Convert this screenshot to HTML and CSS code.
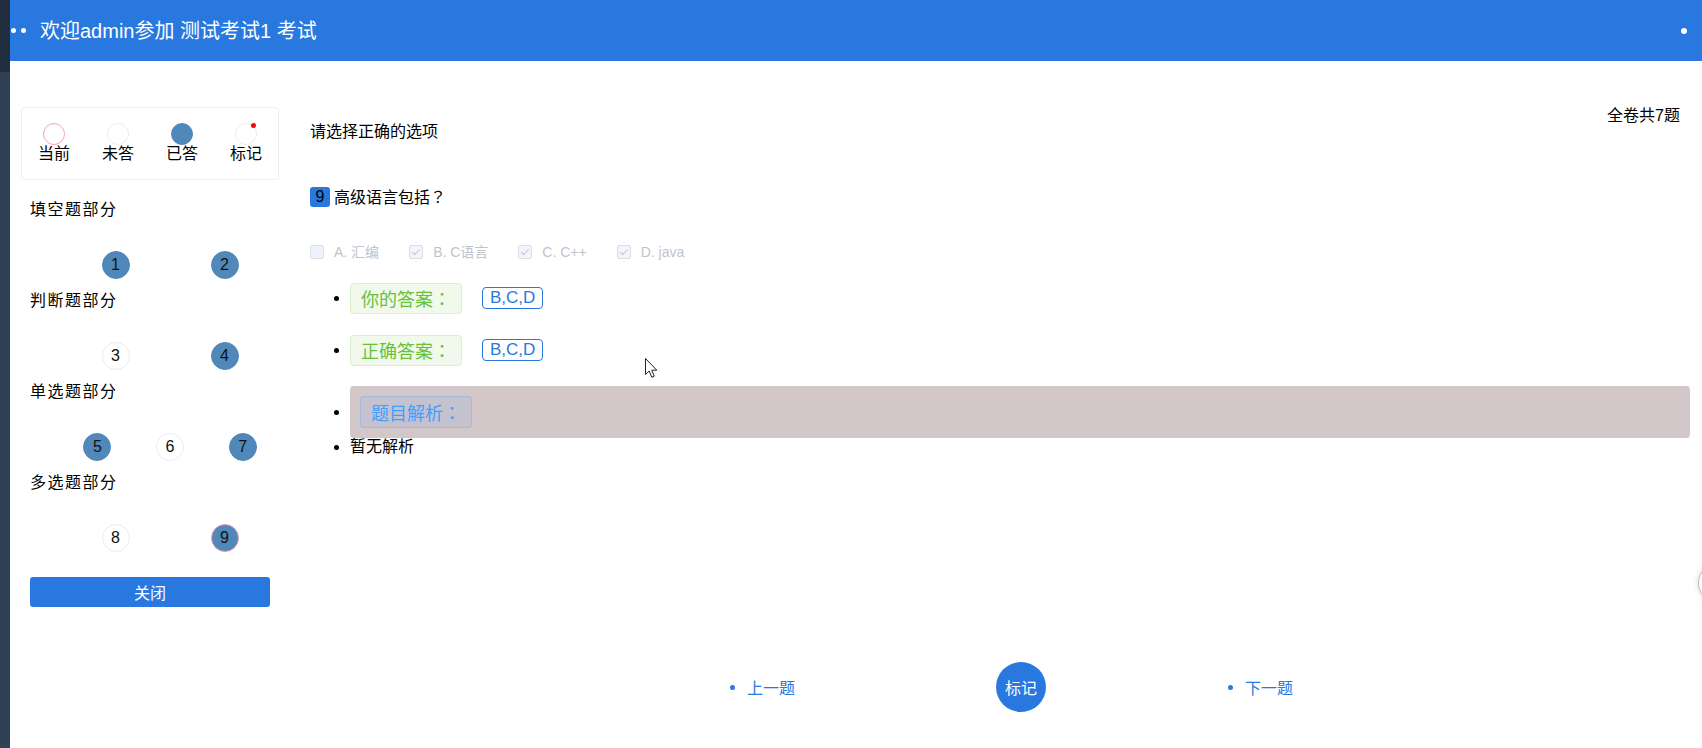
FILE: index.html
```html
<!DOCTYPE html>
<html lang="zh-CN">
<head>
<meta charset="utf-8">
<title>考试</title>
<link rel="stylesheet" href="styles.css">
</head>
<body>
<div class="app">
  <div class="strip"></div>
  <div class="page">
    <header class="header">
      <span class="hdot"></span><span class="hdot"></span>
      <span class="htitle">欢迎admin参加 测试考试1 考试</span>
      <span class="hdot hdot-right"></span>
    </header>
    <div class="body">
      <aside class="sidebar">
        <div class="legend">
          <div class="legend-item"><span class="lcircle lc-current"></span><span class="llabel">当前</span></div>
          <div class="legend-item"><span class="lcircle lc-empty"></span><span class="llabel">未答</span></div>
          <div class="legend-item"><span class="lcircle lc-done"></span><span class="llabel">已答</span></div>
          <div class="legend-item"><span class="lcircle lc-mark"><span class="mark-dot"></span></span><span class="llabel">标记</span></div>
        </div>
        <div class="sec-title first">填空题部分</div>
        <ul class="nums"><li class="num done">1</li><li class="num done">2</li></ul>
        <div class="sec-title">判断题部分</div>
        <ul class="nums"><li class="num">3</li><li class="num done">4</li></ul>
        <div class="sec-title">单选题部分</div>
        <ul class="nums"><li class="num done">5</li><li class="num">6</li><li class="num done">7</li></ul>
        <div class="sec-title">多选题部分</div>
        <ul class="nums"><li class="num">8</li><li class="num done current">9</li></ul>
        <button class="close-btn">关闭</button>
      </aside>
      <main class="content">
        <div class="top-row">
          <div class="instr">请选择正确的选项</div>
          <div class="total">全卷共7题</div>
        </div>
        <div class="question">
          <span class="qbadge">9</span><span class="qtext">高级语言包括<span class="punct" lang="zh-TW">？</span></span>
        </div>
        <div class="options">
          <label class="opt"><span class="cbox"></span><span class="olabel">A. 汇编</span></label>
          <label class="opt"><span class="cbox checked"></span><span class="olabel">B. C语言</span></label>
          <label class="opt"><span class="cbox checked"></span><span class="olabel">C. C++</span></label>
          <label class="opt"><span class="cbox checked"></span><span class="olabel">D. java</span></label>
        </div>
        <ul class="answers">
          <li class="arow"><span class="tag tag-green">你的答案<span class="punct" lang="zh-TW">：</span></span><span class="atag">B,C,D</span></li>
          <li class="arow"><span class="tag tag-green">正确答案<span class="punct" lang="zh-TW">：</span></span><span class="atag">B,C,D</span></li>
          <li class="arow analysis"><div class="abox"><span class="tag tag-blue">题目解析<span class="punct" lang="zh-TW">：</span></span></div></li>
          <li class="arow plain">暂无解析</li>
        </ul>
        <nav class="nav">
          <span class="nav-link prev">上一题</span>
          <span class="mark-btn">标记</span>
          <span class="nav-link next">下一题</span>
        </nav>
      </main>
    </div>
  </div>
</div>
<svg class="cursor" width="13" height="21" viewBox="0 0 13 21"><path d="M0.5 0.5 L0.5 16.5 L4.2 13 L6.8 19.3 L9.3 18.2 L6.8 12.2 L11.8 12.2 Z" fill="#fff" stroke="#222" stroke-width="1"/></svg>
<div class="edge-circle"></div>
</body>
</html>
```

FILE: styles.css
```css
* { box-sizing: border-box; }
html, body { margin: 0; padding: 0; }
body {
  font-family: "Liberation Sans", "Noto Sans CJK SC", sans-serif;
  color: #000;
  background: #fff;
  width: 1702px;
  height: 748px;
  overflow: hidden;
}
.punct { font-family: "Noto Sans CJK TC", sans-serif; }
.app { display: flex; height: 748px; }
.strip {
  width: 10px;
  flex: none;
  background: linear-gradient(#1f2d3d 0, #1f2d3d 72px, #304156 72px);
}
.page { flex: 1; display: flex; flex-direction: column; }

.header {
  height: 61px;
  background: #2878e0;
  display: flex;
  align-items: center;
  padding-left: 1px;
  color: #fff;
}
.hdot {
  width: 5px; height: 5px; border-radius: 50%;
  background: #fff;
  margin-right: 5px;
  flex: none;
}
.htitle { font-size: 20px; margin-left: 9px; line-height: 24px; }
.hdot.hdot-right { width: 6px; height: 6px; margin-left: auto; margin-right: 15px; }

.body { display: flex; flex: 1; }

.sidebar {
  width: 258px;
  margin-left: 11px;
  margin-top: 46px;
  flex: none;
}
.legend {
  display: flex;
  border: 1px solid #ebeef5;
  border-radius: 4px;
  padding: 15px 0 16px;
}
.legend-item {
  flex: 1;
  display: flex;
  flex-direction: column;
  align-items: center;
}
.lcircle {
  width: 22px; height: 22px;
  border-radius: 50%;
  position: relative;
  border: 1px solid #ececec;
  background: #fff;
}
.lc-current { border-color: #f7a3bb; }
.lc-done { background: #5088b9; border-color: #5088b9; }
.mark-dot {
  position: absolute;
  width: 5px; height: 5px;
  border-radius: 50%;
  background: #f00;
  right: 0; top: -1px;
}
.llabel { font-size: 16px; line-height: 18px; }

.sec-title {
  font-size: 16px;
  line-height: 24px;
  height: 24px;
  padding-left: 9px;
  letter-spacing: 1.5px;
}
.sec-title.first { margin-top: 18px; }
.nums {
  list-style: none;
  margin: 0;
  padding: 29px 0 10px 40px;
  display: flex;
  justify-content: space-around;
}
.num {
  width: 28px; height: 28px;
  border-radius: 50%;
  border: 1px solid #ececec;
  background: #fff;
  font-size: 16px;
  line-height: 26px;
  text-align: center;
  color: #111;
}
.num.done { background: #5088b9; border-color: #5088b9; }
.num.current { border-color: #f09ab3; }
.close-btn {
  display: block;
  margin: 15px 9px 0;
  width: 240px;
  height: 30px;
  border: none;
  border-radius: 3px;
  background: #2878e0;
  color: #fff;
  font-family: inherit;
  font-size: 16px;
  padding: 0;
}

.content {
  flex: 1;
  margin-left: 31px;
  margin-right: 12px;
  margin-top: 45px;
  display: flex;
  flex-direction: column;
}
.top-row {
  display: flex;
  justify-content: space-between;
  align-items: flex-start;
  font-size: 16px;
  line-height: 20px;
}
.instr { padding-top: 16px; }
.total { margin-right: 10px; }
.question {
  margin-top: 45px;
  display: flex;
  align-items: center;
  height: 20px;
}
.qbadge {
  width: 20px; height: 20px;
  border-radius: 3px;
  background: #2878e0;
  color: #000;
  font-size: 16px;
  line-height: 20px;
  text-align: center;
}
.qtext { margin-left: 4px; font-size: 16px; line-height: 20px; }

.options {
  margin-top: 35px;
  height: 20px;
  display: flex;
  align-items: center;
}
.opt { display: flex; align-items: center; margin-right: 30px; }
.cbox {
  width: 14px; height: 14px;
  border: 1px solid #dcdfe6;
  border-radius: 2px;
  background: #edf2fc;
  position: relative;
}
.cbox.checked { background: #f2f6fc; }
.cbox.checked::after {
  content: "";
  position: absolute;
  left: 4px; top: 1px;
  width: 3px; height: 7px;
  border-right: 1px solid #c0c4cc;
  border-bottom: 1px solid #c0c4cc;
  transform: rotate(45deg);
}
.olabel { padding-left: 10px; font-size: 14px; color: #c0c4cc; line-height: 20px; }

.answers {
  list-style: none;
  margin: 10px 0 0;
  padding: 0 0 0 24px;
}
.arow {
  display: flex;
  align-items: center;
  height: 52px;
}
.arow::before {
  content: "";
  width: 5px; height: 5px;
  border-radius: 50%;
  background: #000;
  margin-right: 11px;
  flex: none;
}
.arow.analysis { margin-top: 10px; }
.arow.plain { height: 18px; font-size: 16px; line-height: 18px; }
.tag {
  display: inline-block;
  height: 31px;
  line-height: 29px;
  padding: 0 10px;
  font-size: 18px;
  border-radius: 4px;
  border: 1px solid;
}
.tag-green { background: #f0f9eb; border-color: #d9f0cb; color: #67c23a; }
.tag-blue {
  height: 32px; line-height: 30px;
  background: rgba(64,158,255,0.1);
  border-color: rgba(64,158,255,0.25);
  color: #409eff;
}
.atag {
  margin-left: 20px;
  height: 22px;
  line-height: 20px;
  padding: 0 7px;
  border: 1px solid #2878e0;
  border-radius: 4px;
  color: #2878e0;
  font-size: 17px;
}
.abox {
  flex: 1;
  height: 52px;
  background: #d3c7ca;
  border-radius: 4px;
  display: flex;
  align-items: center;
  padding-left: 10px;
}

.nav {
  margin-top: 206px;
  display: flex;
  align-items: center;
  height: 50px;
  padding-left: 420px;
}
.nav-link {
  display: flex;
  align-items: center;
  color: #2878e0;
  font-size: 16px;
}
.nav-link::before {
  content: "";
  width: 5px; height: 5px;
  border-radius: 50%;
  background: #2878e0;
  margin-right: 12px;
}
.mark-btn {
  width: 50px; height: 50px;
  border-radius: 50%;
  background: #2878e0;
  color: #fff;
  font-size: 16px;
  display: flex;
  align-items: center;
  justify-content: center;
  margin-left: 201px;
  margin-right: 182px;
}

.cursor { position: absolute; left: 645px; top: 358px; }
.edge-circle {
  position: absolute;
  left: 1698px; top: 563px;
  width: 40px; height: 40px;
  border-radius: 50%;
  border: 1px solid #bbb;
  background: #fff;
  box-shadow: 0 0 6px rgba(0,0,0,0.15);
}
```
